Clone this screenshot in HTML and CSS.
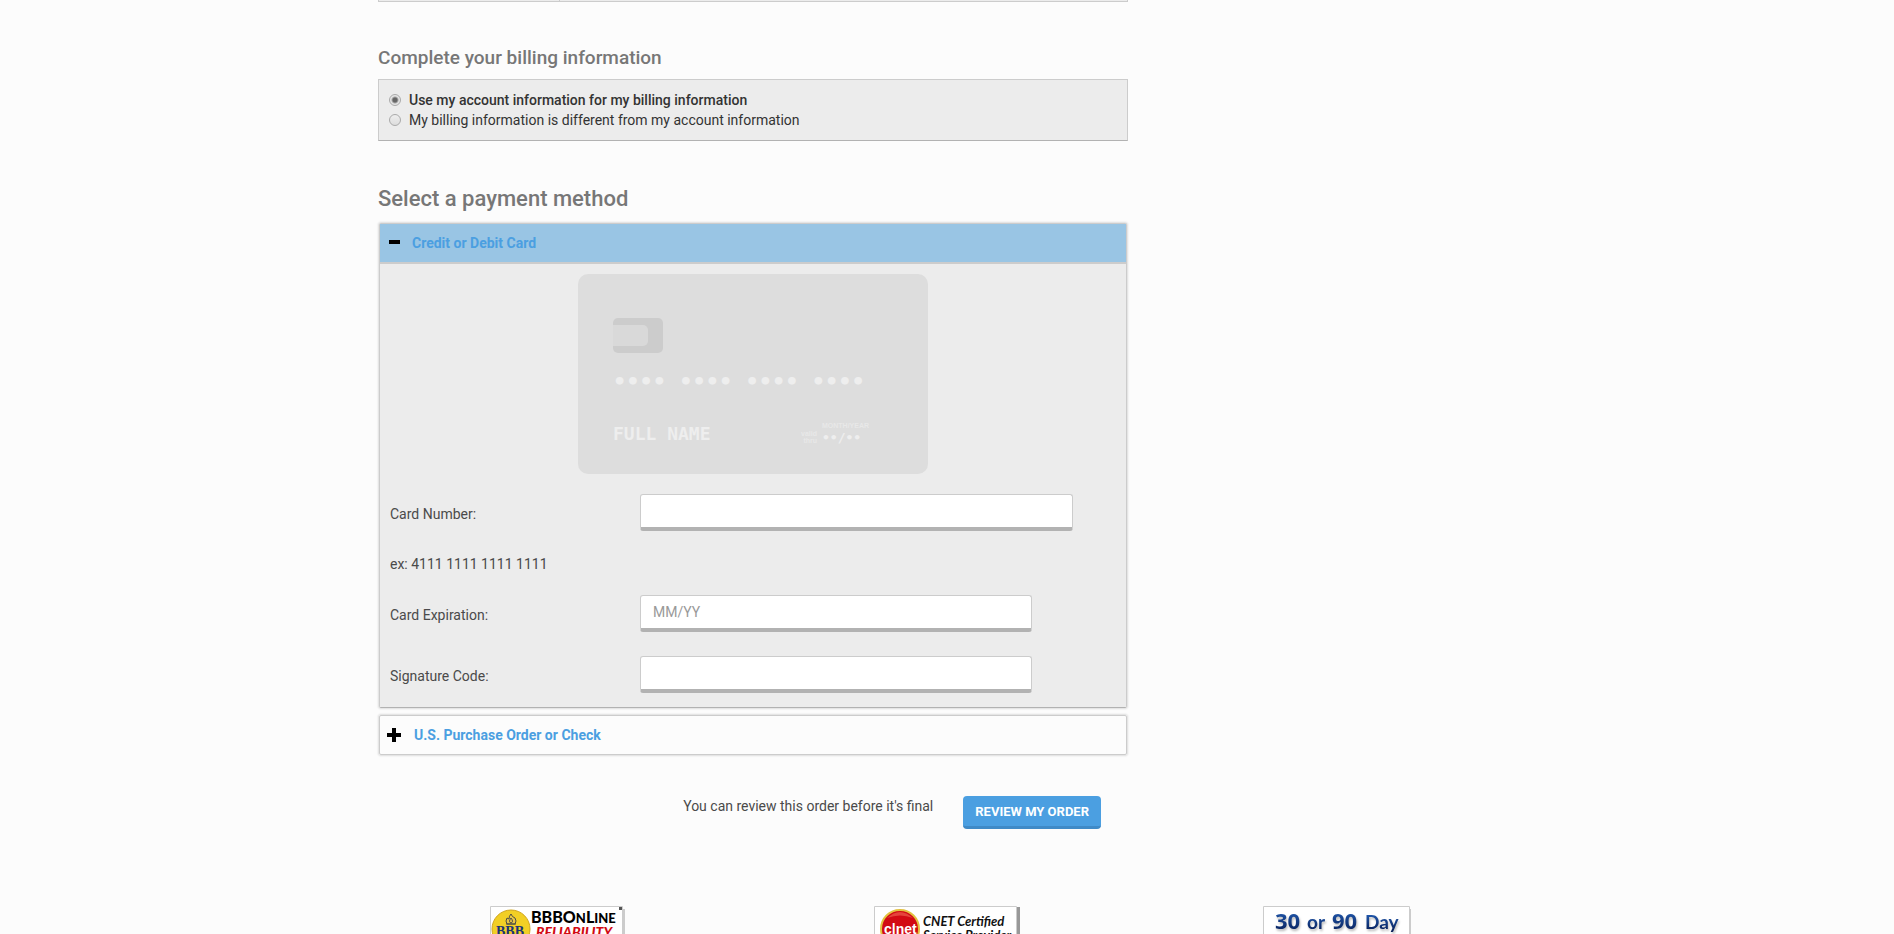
FILE: index.html
```
<!DOCTYPE html>
<html lang="en">
<head>
<meta charset="utf-8">
<title>Checkout</title>
<link rel="stylesheet" href="styles.css">
</head>
<body>
<main class="page">
  <form class="checkout">
    <div class="summary-end"><span class="summary-cell"></span></div>

    <h3 class="billing-title">Complete your billing information</h3>
    <div class="billing-box">
      <label class="choice choice-on"><input class="radio" type="radio" name="billing" checked>Use my account information for my billing information</label>
      <label class="choice"><input class="radio" type="radio" name="billing">My billing information is different from my account information</label>
    </div>

    <h2 class="payment-title">Select a payment method</h2>
    <section class="method">
      <button class="method-head method-open" type="button">
        <svg class="sign" viewBox="0 0 14 14"><path d="M2 4h11v4H2z"/></svg>Credit or Debit Card
      </button>
      <div class="method-body">
        <div class="card">
          <div class="chip"></div>
          <div class="card-number">•••• •••• •••• ••••</div>
          <div class="card-foot">
            <div class="card-name">FULL NAME</div>
            <div class="valid">valid<br>thru</div>
            <div class="expiry"><span class="expiry-label">MONTH/YEAR</span><span class="expiry-value">••/••</span></div>
          </div>
        </div>
        <div class="fields">
          <div class="field"><label for="number">Card Number:</label><input class="text-box wide" id="number" type="text"></div>
          <p class="example">ex: 4111 1111 1111 1111</p>
          <div class="field"><label for="expiration">Card Expiration:</label><input class="text-box" id="expiration" type="text" placeholder="MM/YY"></div>
          <div class="field"><label for="code">Signature Code:</label><input class="text-box" id="code" type="text"></div>
        </div>
      </div>
    </section>
    <section class="method">
      <button class="method-head method-closed" type="button">
        <svg class="sign" viewBox="0 0 14 14"><path d="M5 0h4v5h5v4H9v5H5V9H0V5h5z"/></svg>U.S. Purchase Order or Check
      </button>
    </section>

    <div class="review">
      <span>You can review this order before it's final</span>
      <button class="review-button" type="submit">REVIEW MY ORDER</button>
    </div>
  </form>

  <footer class="badges">
    <svg class="badge" width="138" height="64" viewBox="0 0 138 64">
      <path class="badge-shade" d="M3 3h132v60H3z"/>
      <path class="badge-face" d="M.5.5h132v60H.5z"/>
      <circle cx="21" cy="23" r="19" fill="#f2cf25" stroke="#d0a51c"/>
      <path d="M21 8q1 3 4 4 2 3 0 6h-8q-2-3 0-6l2 1q0-3 2-5z" fill="#e9c744" stroke="#4b4c46"/>
      <path d="M21 12q-3 4 0 5 3-1 0-5zM16 18h10" fill="none" stroke="#4b4c46"/>
      <text class="bbb-seal" x="6" y="30">BBB</text>
      <text class="bbb-title" x="41" y="17">BBBO<tspan class="small-caps">N</tspan>L<tspan class="small-caps">INE</tspan></text>
      <text class="bbb-sub" x="46" y="31">RELIABILITY</text>
      <path d="M129 1h3v3h-3z" fill="#555"/>
    </svg>
    <svg class="badge" width="148" height="64" viewBox="0 0 148 64">
      <path fill="#999" d="M143 1h3v62h-3z"/>
      <path class="badge-face" d="M.5.5h142v60H.5z"/>
      <circle cx="26" cy="23" r="19" fill="#d20b13" stroke="#e3c13f" stroke-width="2"/>
      <path d="M13 12q13-12 26 0-13-5-26 0" fill="#e5443c"/>
      <text class="cnet-logo" x="10" y="28">c|net</text>
      <text class="cnet-title" x="49" y="20">CNET Certified</text>
      <text class="cnet-title" x="49" y="34">Service Provider</text>
    </svg>
    <svg class="badge" width="149" height="64" viewBox="0 0 149 64">
      <path class="badge-shade" d="M3 3h145v60H3z"/>
      <path class="badge-face" d="M.5.5h146v60H.5z"/>
      <defs><linearGradient id="blue" x1="0" y1="0" x2="0" y2="1"><stop offset="0" stop-color="#2868c4"/><stop offset="1" stop-color="#04184f"/></linearGradient></defs>
      <g class="day"><text class="day-big" x="12" y="23">30</text><text x="44" y="23">or</text><text class="day-big" x="69" y="23">90</text><text x="102" y="23">Day</text></g>
    </svg>
  </footer>
</main>
</body>
</html>
```
FILE: styles.css
```
* { box-sizing: border-box; }
body {
  margin: 0;
  height: 100vh;
  overflow: hidden;
  background: #fcfcfc;
  color: #4a4a4a;
  font: 14px/20px Roboto, "Liberation Sans", sans-serif;
}
input, button { font: inherit; color: inherit; }
.page { max-width: 1138px; margin: 0 auto; }
.checkout { max-width: 750px; }

.summary-end {
  display: flex;
  height: 2px;
  background: #ececec;
  border: 1px solid #ccc;
  border-top: 0;
}
.summary-cell { width: 181px; border-right: 1px solid #ccc; }

.billing-title, .payment-title { margin: 0; color: #777; font-weight: 500; }
.billing-title { padding-top: 43px; font-size: 19px; line-height: 26px; }
.billing-box {
  display: flex;
  flex-direction: column;
  margin-top: 8px;
  padding: 10px;
  background: #ececec;
  border: 1px solid #ccc;
  border-bottom-color: #b2b2b2;
}
.choice { display: flex; align-items: center; gap: 8px; color: #333; }
.choice-on { font-weight: 500; }
.radio {
  appearance: none;
  width: 12px;
  height: 12px;
  margin: 0;
  border: 1px solid #aaa;
  border-radius: 50%;
  background: linear-gradient(#eee, #ddd);
}
.radio:checked { background: radial-gradient(circle, #666 2px, #e6e6e6 4px); }

.payment-title { padding-top: 42px; font-size: 22px; line-height: 32px; }
.method {
  margin: 6px 1px 0;
  border: 1px solid #ccc;
  border-radius: 2px;
  box-shadow: 0 0 2px 1px #ddd;
}
.payment-title + .method { margin-top: 8px; border-bottom-color: #b2b2b2; }
.method-head {
  display: flex;
  align-items: center;
  gap: 13px;
  width: 100%;
  padding: 9px 7px;
  border: 0;
  background: none;
  color: #4b9fe1;
  font-weight: 700;
  cursor: pointer;
}
.method-open { background: #99c5e4; border-bottom: 2px solid #ccc; gap: 11px; }
.sign { width: 14px; height: 14px; fill: #000; }
.method-body { padding: 10px; background: #ececec; }

.card {
  width: 350px;
  height: 200px;
  margin: 0 auto;
  padding: 44px 35px 0;
  border-radius: 10px;
  background: #ddd;
  color: #eee;
}
.chip {
  width: 50px;
  height: 35px;
  padding: 7px 0;
  border-radius: 5px;
  background: #ccc;
}
.chip::before {
  content: "";
  display: block;
  width: 35px;
  height: 21px;
  border-radius: 0 5px 5px 0;
  background: #d9d9d9;
}
.card-number { margin-top: 13px; font: bold 22px/32px "DejaVu Sans Mono", monospace; white-space: nowrap; }
.card-foot { display: flex; align-items: flex-end; margin-top: 22px; }
.card-name { width: 184px; font: bold 18px/28px "DejaVu Sans Mono", monospace; }
.valid { width: 20px; margin-bottom: 4px; text-align: right; font: bold 7px/7px "Liberation Sans", sans-serif; color: #e8e8e8; }
.expiry { display: flex; flex-direction: column; margin: 0 0 1px 5px; }
.expiry-label { font: bold 7px/7px "Liberation Sans", sans-serif; color: #e8e8e8; }
.expiry-value { font: bold 13px/18px "DejaVu Sans Mono", monospace; }

.fields { display: flex; flex-direction: column; gap: 24px; margin-top: 20px; padding-bottom: 4px; }
.field { display: grid; grid-template-columns: 250px 1fr; align-items: center; }
.field label { padding-top: 2px; }
.text-box {
  width: 100%;
  max-width: 392px;
  height: 37px;
  padding: 0 12px;
  border: 1px solid #ccc;
  border-bottom: 4px solid #b2b2b2;
  border-radius: 3px;
  background: #fff;
}
.text-box::placeholder { color: #999; }
.wide { max-width: 433px; }
.example { margin: 0; padding-top: 2px; line-height: 14px; }

.method + .method { margin-top: 7px; }

.review {
  display: flex;
  justify-content: flex-end;
  align-items: flex-start;
  gap: 30px;
  margin: 41px 27px 0 0;
}
.review-button {
  padding: 6px 12px 4px;
  border: 0;
  border-bottom: 3px solid #3f8ac7;
  border-radius: 4px;
  background: #4b9fe1;
  color: #fff;
  font-size: 13px;
  font-weight: 700;
}

.badges {
  display: grid;
  grid-template-columns: 384px 389px 1fr;
  margin: 77px 0 0 112px;
}
.badge-shade { fill: #ccc; }
.badge-face { fill: #fff; stroke: #ccc; }
.bbb-seal { font: bold 14px "Liberation Serif", serif; fill: #1d3476; }
.bbb-title { font: 900 16px Lato, sans-serif; fill: #000; }
.small-caps { font-size: 13px; }
.bbb-sub { font: italic 900 14px Lato, sans-serif; fill: #d20b13; }
.cnet-logo { font: bold 14px "Liberation Sans", sans-serif; fill: #fff; }
.cnet-title { font: italic 700 13px Lato, sans-serif; fill: #111; }
.day { font: 700 19px Lato, sans-serif; fill: url(#blue); filter: drop-shadow(1px 2px 1px #bbb); }
.day-big { font: 700 22px "Open Sans", sans-serif; }
```
